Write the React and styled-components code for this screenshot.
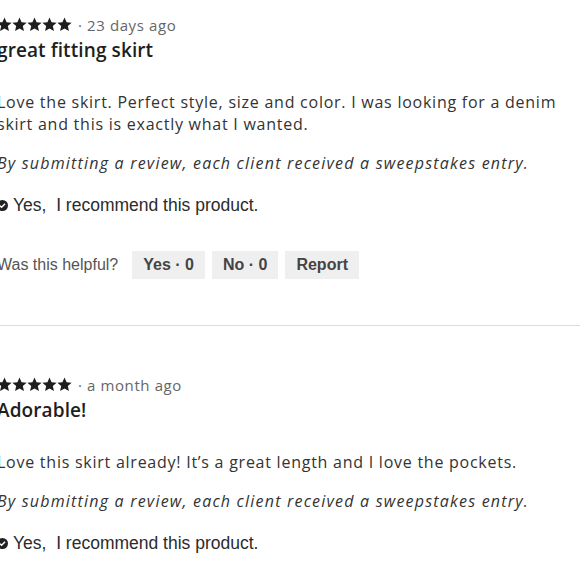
import React from 'react'
import styled, { createGlobalStyle } from 'styled-components'

const Global = createGlobalStyle`
  html, body { margin: 0; padding: 0; background: #fff; }
  body { font-family: "Open Sans", "Liberation Sans", sans-serif; }
`

const Page = styled.div`
  width: 590px;
  margin-left: -3px;
  padding-top: 15px;
`

const Review = styled.article`
  display: flex;
  flex-direction: column;
  padding-bottom: ${p => (p.last ? '0' : '46px')};
  border-bottom: ${p => (p.last ? 'none' : '1px solid #dcdcdc')};
  margin-bottom: ${p => (p.last ? '0' : '49px')};
`

const Meta = styled.div`
  display: flex;
  align-items: center;
  gap: 6px;
  height: 19px;
`

const Stars = styled.div`
  display: flex;
  gap: 0;
`

const When = styled.span`
  font-size: 15px;
  letter-spacing: 0.6px;
  color: #666;
`

const Title = styled.h3`
  margin: 4px 0 0;
  font-size: 19px;
  font-weight: 600;
  letter-spacing: 0.1px;
  color: #1e1e1e;
  line-height: 24px;
`

const Body = styled.p`
  margin: 29px 0 0;
  font-size: 16px;
  letter-spacing: 0.75px;
  line-height: 22px;
  color: #333;
`

const Note = styled.p`
  margin: 17px 0 0;
  font-size: 16px;
  letter-spacing: 1.2px;
  line-height: 22px;
  font-style: italic;
  color: #333;
`

const Recommend = styled.div`
  margin-top: 20px;
  display: flex;
  align-items: center;
  gap: 5px;
  font-family: "Liberation Sans", Arial, sans-serif;
  font-size: 17.5px;
  color: #2b2b2b;
  line-height: 22px;
`

const Helpful = styled.div`
  margin-top: 35px;
  display: flex;
  align-items: center;
  gap: 7px;
  font-family: "Liberation Sans", Arial, sans-serif;
  font-size: 16px;
  color: #555;
`

const Ask = styled.span`
  margin-right: 7px;
`

const Vote = styled.button`
  border: none;
  background: #efefef;
  font-family: "Liberation Sans", Arial, sans-serif;
  font-size: 16px;
  font-weight: bold;
  color: #444;
  height: 28px;
  padding: 0 11px;
  cursor: pointer;
`

const Star = () => (
  <svg width="15" height="15" viewBox="0 0 24 24">
    <path d="M12 0.8l3.3 7.4 8.1.8-6.1 5.4 1.8 8L12 18.3l-7.1 4.1 1.8-8L.6 9l8.1-.8z" fill="#1e1e1e" />
  </svg>
)

const Check = () => (
  <svg width="11" height="11" viewBox="0 0 12 12">
    <circle cx="6" cy="6" r="6" fill="#222" />
    <path d="M3.2 6.2l1.8 1.8 3.8-3.8" stroke="#fff" strokeWidth="1.6" fill="none" />
  </svg>
)

const reviews = [
  {
    when: '23 days ago',
    title: 'great fitting skirt',
    text: 'Love the skirt. Perfect style, size and color. I was looking for a denim skirt and this is exactly what I wanted.',
    helpful: true,
  },
  {
    when: 'a month ago',
    title: 'Adorable!',
    text: "Love this skirt already! It\u2019s a great length and I love the pockets.",
    helpful: false,
  },
]

export default function App() {
  return (
    <Page>
      <Global />
      {reviews.map((r, i) => (
        <Review key={i} last={i === reviews.length - 1}>
          <Meta>
            <Stars>
              {[0, 1, 2, 3, 4].map(n => <Star key={n} />)}
            </Stars>
            <When>· {r.when}</When>
          </Meta>
          <Title>{r.title}</Title>
          <Body>{r.text}</Body>
          <Note>By submitting a review, each client received a sweepstakes entry.</Note>
          <Recommend>
            <Check />
            <span>Yes,&nbsp; I recommend this product.</span>
          </Recommend>
          {r.helpful && (
            <Helpful>
              <Ask>Was this helpful?</Ask>
              <Vote>Yes · 0</Vote>
              <Vote>No · 0</Vote>
              <Vote>Report</Vote>
            </Helpful>
          )}
        </Review>
      ))}
    </Page>
  )
}
